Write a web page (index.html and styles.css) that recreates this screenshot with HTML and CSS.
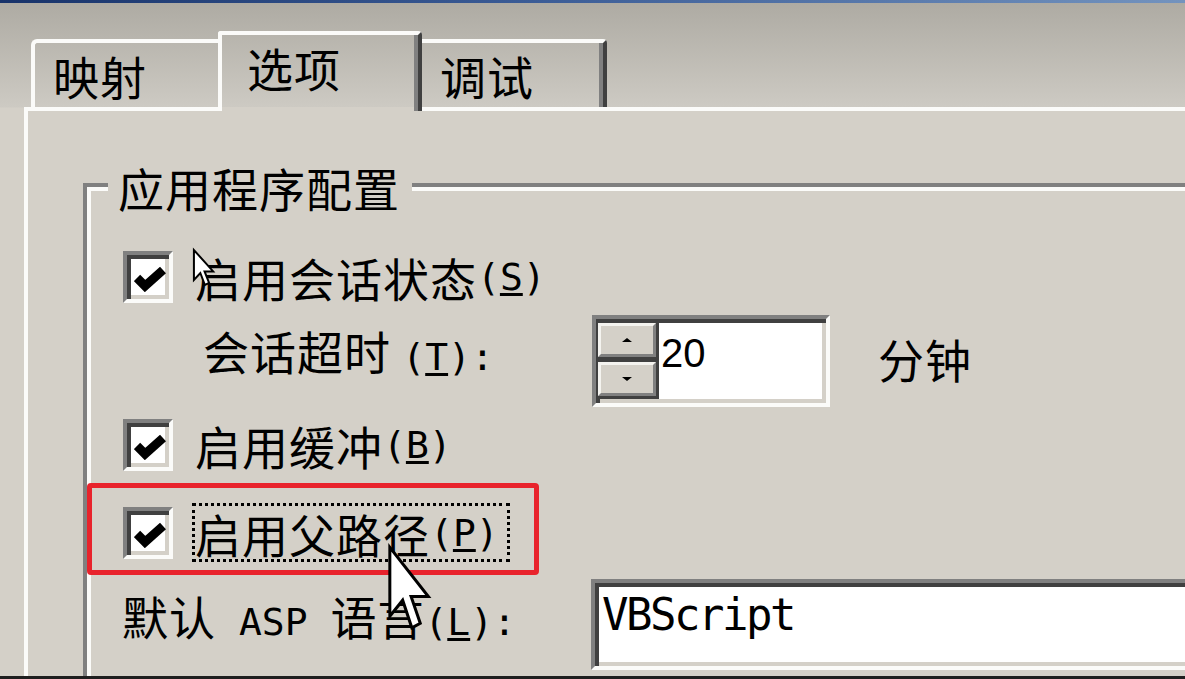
FILE: index.html
```html
<!DOCTYPE html>
<html lang="zh-CN">
<head>
<meta charset="utf-8">
<title>应用程序配置 - 选项</title>
<link rel="stylesheet" href="styles.css">
</head>
<body>
<div class="titlebar"></div>
<div class="dialog">
  <div class="tabs">
    <div class="tab tab-first">映射</div>
    <div class="tab tab-active">选项</div>
    <div class="tab tab-last">调试</div>
  </div>
  <div class="panel">
    <div class="group">
      <div class="group-title">应用程序配置</div>

      <div class="row r1">
        <span class="cb"><svg viewBox="0 0 32 26" width="32" height="26"><polyline points="3,12 11,20 29,4" fill="none" stroke="#000" stroke-width="9"/></svg></span>
        <span class="lbl">启用会话状态<span class="a">(<u>S</u>)</span></span>
        <svg class="cursor cursor1" viewBox="0 0 12 20" width="22" height="40" preserveAspectRatio="none"><path d="M0.5,0.5 L0.5,15.5 L4,12 L6.5,18 L8.8,17 L6.3,11.2 L11,11.2 Z" fill="#fff" stroke="#000" stroke-width="2" vector-effect="non-scaling-stroke"/></svg>
      </div>

      <div class="row r2">
        <span class="lbl2">会话超时 <span class="a">(<u>T</u>):</span></span>
        <div class="spin">
          <div class="spin-btns">
            <div class="sb up"></div>
            <div class="sb down"></div>
          </div>
          <div class="spin-val">20</div>
        </div>
        <span class="unit">分钟</span>
      </div>

      <div class="row r3">
        <span class="cb"><svg viewBox="0 0 32 26" width="32" height="26"><polyline points="3,12 11,20 29,4" fill="none" stroke="#000" stroke-width="9"/></svg></span>
        <span class="lbl">启用缓冲<span class="a">(<u>B</u>)</span></span>
      </div>

      <div class="row r4">
        <div class="highlight"></div>
        <span class="cb"><svg viewBox="0 0 32 26" width="32" height="26"><polyline points="3,12 11,20 29,4" fill="none" stroke="#000" stroke-width="9"/></svg></span>
        <span class="lbl focus">启用父路径<span class="a">(<u>P</u>)</span></span>
        <svg class="cursor cursor2" viewBox="0 0 12 20" width="44" height="92" preserveAspectRatio="none"><path d="M0.5,0.5 L0.5,15.5 L4,12 L6.5,18 L8.8,17 L6.3,11.2 L11,11.2 Z" fill="#fff" stroke="#000" stroke-width="3" vector-effect="non-scaling-stroke"/></svg>
      </div>

      <div class="row r5">
        <span class="lbl5">默认<span class="a"> ASP </span>语言<span class="a">(<u>L</u>):</span></span>
        <div class="field">VBScript</div>
      </div>
    </div>
  </div>
</div>
</body>
</html>
```
FILE: styles.css
```css
html, body {
  margin: 0;
  padding: 0;
}

body {
  width: 1185px;
  height: 679px;
  overflow: hidden;
  display: flex;
  flex-direction: column;
  background: linear-gradient(#adaaa2 0px, #cdcac3 107px, #d4d0c8 108px);
  font-family: "Noto Sans CJK SC", "Noto Sans", sans-serif;
  color: #000;
}

.titlebar {
  height: 3px;
  flex: none;
  background: linear-gradient(90deg, #18336a 0%, #3b5c96 45%, #7393be 100%);
}

.dialog {
  flex: 1;
  display: flex;
  flex-direction: column;
  padding-left: 24px;
  border-bottom: 3px solid #1e1e1e;
  min-width: 0;
}

/* ---------- tabs ---------- */
.tabs {
  display: flex;
  align-items: flex-end;
  margin-top: 28px;
  margin-left: 7px;
  flex: none;
}

.tab {
  box-sizing: border-box;
  font-size: 46px;
  line-height: 46px;
  letter-spacing: 1px;
  padding-top: 9px;
  white-space: nowrap;
}

.tab-first {
  width: 187px;
  height: 68px;
  border-top: 4px solid #fbfbf9;
  border-left: 4px solid #fbfbf9;
  border-top-left-radius: 6px;
  padding-left: 18px;
}

.tab-active {
  width: 204px;
  height: 80px;
  margin-bottom: -4px;
  position: relative;
  z-index: 1;
  border-top: 4px solid #fbfbf9;
  border-left: 4px solid #fbfbf9;
  border-right: 4px solid #404040;
  border-top-left-radius: 3px;
  border-top-right-radius: 4px;
  box-shadow: inset -4px 0 0 #808080;
  padding-left: 25px;
  background: linear-gradient(to bottom, transparent calc(100% - 4px), #d4d0c8 calc(100% - 4px));
}

.tab-last {
  width: 185px;
  height: 68px;
  border-top: 4px solid #fbfbf9;
  border-right: 4px solid #404040;
  border-top-right-radius: 4px;
  box-shadow: inset -4px 0 0 #808080;
  padding-left: 18px;
}

/* ---------- panel ---------- */
.panel {
  flex: 1;
  display: flex;
  flex-direction: column;
  border-top: 4px solid #fbfbf9;
  border-left: 4px solid #fbfbf9;
  background: #d4d0c8;
  min-width: 0;
}

.group {
  flex: 1;
  position: relative;
  margin: 72px 0 0 55px;
  padding: 64px 0 0 36px;
  border-top: 4px solid #808080;
  border-left: 4px solid #808080;
  box-shadow: inset 4px 4px 0 #fbfbf9;
  min-width: 0;
}

.group-title {
  position: absolute;
  top: -23px;
  left: 21px;
  padding: 0 12px 0 10px;
  background: #d4d0c8;
  font-size: 46px;
  line-height: 46px;
  letter-spacing: 1px;
  white-space: nowrap;
}

/* ---------- rows ---------- */
.row {
  display: flex;
  align-items: center;
  position: relative;
  white-space: nowrap;
  font-size: 46px;
  line-height: 46px;
  letter-spacing: 1px;
}

.r1 { height: 52px; }
.r2 { height: 92px; margin-top: 12px; align-items: flex-start; }
.r3 { height: 50px; margin-top: 13px; }
.r4 { height: 59px; margin-top: 33px; }
.r5 { height: 91px; margin-top: 17px; align-items: flex-start; }

.a {
  font-family: "DejaVu Sans Mono", "Liberation Mono", monospace;
  font-size: 38px;
  letter-spacing: 0;
}

.a u {
  text-decoration-thickness: 3px;
  text-underline-offset: 3px;
}

/* sunken checkbox */
.cb {
  box-sizing: border-box;
  width: 50px;
  height: 52px;
  flex: none;
  display: flex;
  align-items: center;
  justify-content: center;
  background: #fff;
  border: 4px solid;
  border-color: #808080 #fbfbf9 #fbfbf9 #808080;
  box-shadow: inset 4px 4px 0 #404040, inset -4px -4px 0 #d4d0c8;
  padding: 4px 0 0 4px;
}

.cb svg {
  display: block;
}

.lbl {
  box-sizing: border-box;
  height: 59px;
  display: flex;
  align-items: center;
  margin-left: 19px;
  border: 3px solid transparent;
  padding-right: 8px;
}

.lbl.focus {
  border: 3px dotted #000;
}

.lbl2 {
  margin-left: 80px;
  width: 389px;
  padding-top: 12px;
  flex: none;
}

.lbl5 {
  margin-left: -1px;
  width: 469px;
  padding-top: 13px;
  flex: none;
}

/* spinner */
.spin {
  box-sizing: border-box;
  width: 238px;
  height: 92px;
  flex: none;
  display: flex;
  background: #fff;
  border: 4px solid;
  border-color: #808080 #fbfbf9 #fbfbf9 #808080;
  box-shadow: inset 4px 4px 0 #404040, inset -4px -4px 0 #d4d0c8;
  padding: 4px 4px 4px 2px;
}

.spin-btns {
  width: 58px;
  display: flex;
  flex-direction: column;
  gap: 5px;
  background: #404040;
  padding: 0 3px 3px 0;
}

.sb {
  flex: 1;
  display: flex;
  align-items: center;
  justify-content: center;
  background: #d4d0c8;
  border: 3px solid;
  border-color: #f4f3ef #808080 #808080 #f4f3ef;
}

.sb.up::before {
  content: "";
  border-left: 5px solid transparent;
  border-right: 5px solid transparent;
  border-bottom: 4px solid #000;
}

.sb.down::before {
  content: "";
  border-left: 5px solid transparent;
  border-right: 5px solid transparent;
  border-top: 4px solid #000;
}

.spin-val {
  font-family: "Liberation Sans", Arial, sans-serif;
  font-size: 40px;
  line-height: 40px;
  letter-spacing: 0;
  padding: 10px 0 0 2px;
}

.unit {
  margin-left: 48px;
  padding-top: 20px;
}

/* text field: runs off the right edge of the frame, so no right border */
.field {
  box-sizing: border-box;
  flex: 1;
  min-width: 0;
  height: 91px;
  background: #fff;
  border: 4px solid;
  border-right: 0;
  border-color: #808080 #fbfbf9 #fbfbf9 #808080;
  box-shadow: inset 4px 4px 0 #404040, inset 0 -4px 0 #d4d0c8;
  padding: 7px 0 4px 7px;
  overflow: hidden;
  font-family: "DejaVu Sans Mono", "Liberation Mono", monospace;
  font-size: 44px;
  line-height: 50px;
  letter-spacing: -2.5px;
}

/* overlays */
.highlight {
  position: absolute;
  left: -36px;
  top: -20px;
  width: 452px;
  height: 92px;
  box-sizing: border-box;
  border: 5px solid #e8232c;
  border-radius: 4px;
  pointer-events: none;
}

.cursor {
  position: absolute;
  z-index: 5;
  overflow: visible;
}

.cursor1 {
  left: 70px;
  top: -2px;
}

.cursor2 {
  left: 265px;
  top: 42px;
}
```
